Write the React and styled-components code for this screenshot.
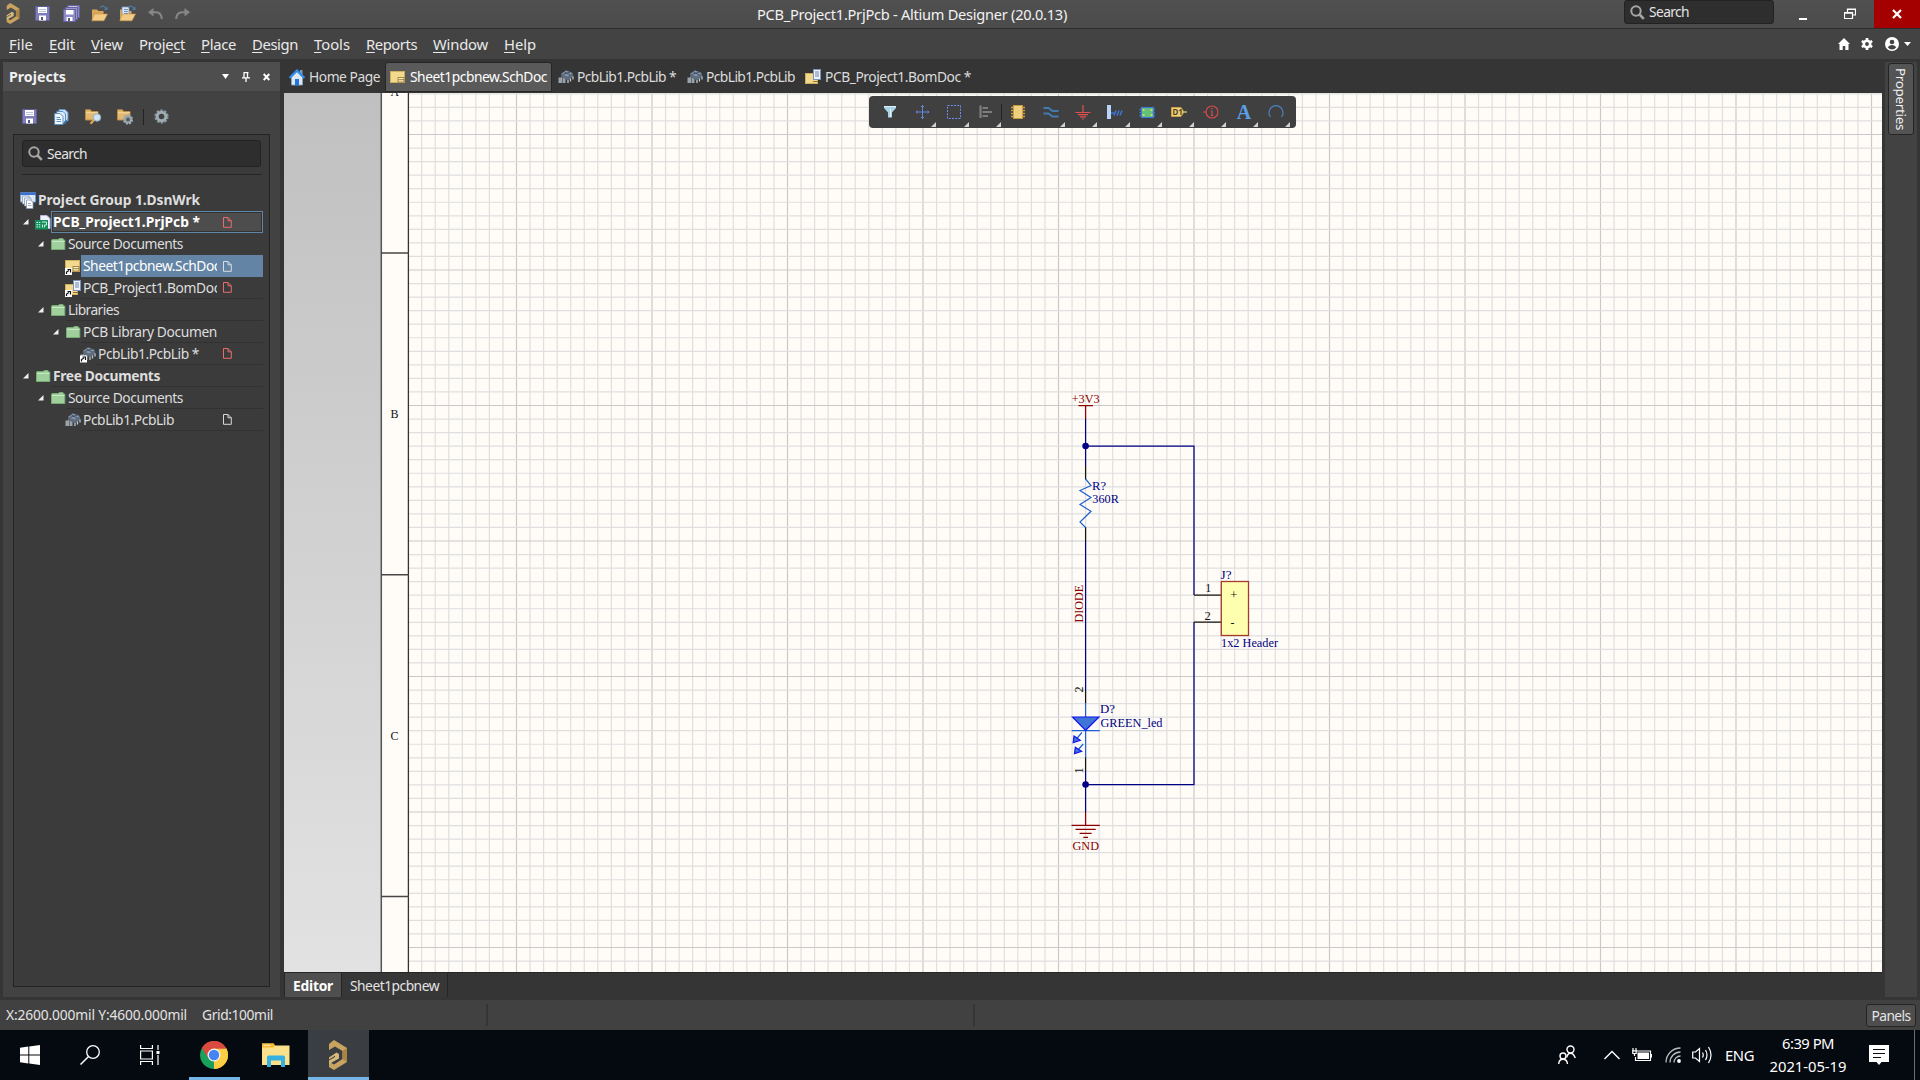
import React, { useLayoutEffect, useRef, useState } from "react";
import styled, { createGlobalStyle, css } from "styled-components";

const GlobalStyle = createGlobalStyle`
  * { box-sizing: border-box; }
  html, body { margin: 0; padding: 0; background: #363636; overflow: hidden; }
  body { font-family: "Noto Sans", "Segoe UI", sans-serif; color: #e6e6e6; }
  svg { display: block; flex: none; }
`;

/* ---------- text ---------- */

const TextSpan = styled.span`
  display: inline-block;
  flex: none;
  white-space: pre;
  font-size: ${(p) => p.$size}px;
  font-weight: ${(p) => (p.$bold ? 700 : 400)};
  color: ${(p) => p.$color};
  line-height: 20px;
  u {
    text-decoration: underline;
    text-decoration-thickness: 1px;
    text-underline-offset: 2px;
  }
`;

/* Tightens or loosens the tracking so that the text spans a given width. */
function Label({ w, size = 13.8, bold, color = "#e4e4e4", children }) {
  const ref = useRef(null);
  const [spacing, setSpacing] = useState(0);
  useLayoutEffect(() => {
    const el = ref.current;
    if (!w || !el) return;
    el.style.letterSpacing = "0px";
    const natural = el.getBoundingClientRect().width;
    const next = (w - natural) / el.textContent.length;
    el.style.letterSpacing = `${next}px`;
    setSpacing(next);
  }, [w]);
  return (
    <TextSpan ref={ref} $size={size} $bold={bold} $color={color} style={{ letterSpacing: `${spacing}px` }}>
      {children}
    </TextSpan>
  );
}

/* ---------- icons ---------- */

const AltiumLogo = ({ w = 14, h = 21 }) => (
  <svg width={w} height={h} viewBox="0 0 20 30">
    <path d="M6 0 L19 8 V22 L6 30 L1 27 V21.5 L6 24.5 L14.5 19 V11 L7 6.5 L1 10 V4 Z" fill="#c9a460" />
    <path d="M14.5 11 L19 8 V22 L14.5 19 Z" fill="#a98443" />
    <path d="M1 17.5 L8.500 12.500 L11 14 V18.500 L1 24 V20.500 L7 17 V15.800 L1 19.500 Z" fill="#d8b878" />
  </svg>
);

const SaveIcon = () => (
  <svg width="15" height="15" viewBox="0 0 15 15">
    <path d="M0.5 0.5 H14.5 V14.5 H0.5 Z" fill="#7f7dbb" stroke="#5f5d97" />
    <rect x="3" y="1" width="9" height="6" fill="#fff" />
    <path d="M4 3.5 H11 M4 5.5 H11" stroke="#b9c3d6" />
    <rect x="4" y="9.5" width="7" height="5" fill="#fff" />
    <rect x="6" y="11" width="2" height="3" fill="#55557f" />
  </svg>
);

const SaveAllIcon = () => (
  <svg width="17" height="17" viewBox="0 0 17 17">
    <path d="M4.5 0.5 H16.5 V12.5 H4.5 Z" fill="#8d8bc6" stroke="#65639e" />
    <path d="M6 2.5 H14" stroke="#fff" strokeWidth="2" />
    <path d="M2.5 2.5 H14.5 V14.5 H2.5 Z" fill="#9997ce" stroke="#65639e" />
    <path d="M0.5 4.5 H12.5 V16.5 H0.5 Z" fill="#8d8bc6" stroke="#65639e" />
    <rect x="3" y="5" width="7.500" height="4.500" fill="#fff" />
    <rect x="3.500" y="12" width="6" height="4" fill="#fff" />
    <rect x="5" y="13" width="2" height="3" fill="#55557f" />
  </svg>
);

const OpenIcon = ({ docs }) => (
  <svg width="17" height="17" viewBox="0 0 17 17">
    <path d="M1 15 V4.500 H6 L7.500 6 H12.500 V15 Z" fill="#d9a757" />
    {docs && (
      <g>
        <path d="M3 2 H10 V11 H3 Z" fill="#dbe8f7" stroke="#7f9cc0" strokeWidth="0.8" />
        <path d="M5 4.500 H9 M5 6.500 H9 M5 8.500 H9" stroke="#6d8fba" />
      </g>
    )}
    <path d="M3.500 9 H16.500 L13 15.800 H0.800 Z" fill="#f2cb86" stroke="#c99645" strokeWidth="0.6" />
    <path d="M9.500 2.500 Q12.500 -0.500 15 3.500" fill="none" stroke="#4e7ea8" strokeWidth="1.2" />
    <path d="M16.500 1.500 V5 H12.800 Z" fill="#4e7ea8" />
  </svg>
);

const UndoIcon = ({ flip }) => (
  <svg width="15" height="12" viewBox="0 0 15 12" transform={flip ? "scale(-1 1)" : undefined}>
    <path d="M2 4.200 H8 Q13.500 4.500 13.800 11" fill="none" stroke="#868686" strokeWidth="2" />
    <path d="M0 4.200 L5.500 0 V8.500 Z" fill="#868686" />
  </svg>
);

const MagnifierIcon = () => (
  <svg width="15" height="15" viewBox="0 0 15 15">
    <circle cx="6" cy="6" r="4.700" fill="none" stroke="#a5a5a5" strokeWidth="2" />
    <path d="M9.500 9.500 L13.800 13.800" stroke="#a5a5a5" strokeWidth="2.6" />
  </svg>
);

const PagesIcon = () => (
  <svg width="15" height="16" viewBox="0 0 15 16">
    <path d="M5 0.500 H11 L14 3.500 V12 H5 Z" fill="#cfe2f5" stroke="#5c8fc4" />
    <path d="M2.800 2.500 H9 L11.500 5 V14 H2.800 Z" fill="#dcebf9" stroke="#5c8fc4" />
    <path d="M0.600 4.500 H6 L9 7.500 V15.500 H0.600 Z" fill="#f0f7fd" stroke="#5c8fc4" />
    <path d="M2.500 8.500 H6 M2.500 10.500 H7 M2.500 12.500 H7" stroke="#5c8fc4" />
    <path d="M14.500 10 L10 15 V12.500" fill="#2f74c0" />
  </svg>
);

const FolderToolIcon = ({ gear }) => (
  <svg width="17" height="16" viewBox="0 0 17 16">
    <path d="M0.500 11 V0.800 H5.500 L6.500 2.500 H13 V11 Z" fill="#e3b76f" stroke="#b98c45" />
    <path d="M1 3.800 H13" stroke="#f5dba6" />
    {gear ? (
      <g>
        <circle cx="11" cy="10.500" r="4" fill="#6f7b82" stroke="#9eabb2" strokeWidth="2.200" strokeDasharray="2 1.100" />
        <circle cx="11" cy="10.500" r="3" fill="none" stroke="#9eabb2" strokeWidth="1.500" />
        <circle cx="11" cy="10.500" r="1.500" fill="#555" />
      </g>
    ) : (
      <g>
        <path d="M9 11 L5.500 14.800" stroke="#e0a850" strokeWidth="2.200" />
        <circle cx="12" cy="8.500" r="3.700" fill="#cfe3f2" stroke="#8fb0c8" />
      </g>
    )}
  </svg>
);

const ToolGearIcon = () => (
  <svg width="15" height="15" viewBox="0 0 15 15">
    <circle cx="7.500" cy="7.500" r="5.900" fill="none" stroke="#8b979d" strokeWidth="2.400" strokeDasharray="2.400 1.300" />
    <circle cx="7.500" cy="7.500" r="4.300" fill="none" stroke="#9dabb2" strokeWidth="3" />
  </svg>
);

const FolderIcon = () => (
  <svg width="15" height="13" viewBox="0 0 15 13">
    <path d="M0.500 11.500 V2 L1.500 1.500 H7 L8.500 0.500 H12 L12.500 2 H13.800 V11.500 Z" fill="#9fd09b" stroke="#79aa76" />
    <path d="M1 3.500 H13.500" stroke="#c5e8c2" />
  </svg>
);

const ShortcutMark = ({ x = 0, y = 8 }) => (
  <g transform={`translate(${x} ${y})`}>
    <rect width="7" height="7" fill="#fff" />
    <path d="M1.500 6 V4 L4 2.500 M2.500 1.500 H5.500 V4.500" fill="none" stroke="#111" strokeWidth="1.200" />
  </g>
);

const SchIcon = ({ link }) => (
  <svg width="16" height="17" viewBox="0 0 16 17">
    <rect x="0.500" y="2.500" width="14" height="11" fill="#f3d98d" stroke="#cfae5c" />
    <rect x="8" y="8.500" width="6" height="4.500" fill="#fdf0c0" stroke="#8f7430" strokeWidth="0.8" />
    <path d="M8.500 10.700 H14" stroke="#8f7430" strokeWidth="0.9" />
    {link && <ShortcutMark x={0} y={10} />}
  </svg>
);

const BomIcon = ({ link }) => (
  <svg width="16" height="17" viewBox="0 0 16 17">
    <rect x="0.500" y="4.500" width="12" height="10" fill="#f3d98d" stroke="#cfae5c" />
    <rect x="8.500" y="0.500" width="7" height="10" fill="#eef3fb" stroke="#7d94bd" />
    <path d="M10 3 H14 M10 5 H14 M10 7 H14" stroke="#6f86b0" />
    <path d="M8 12.500 H13" stroke="#8f7430" strokeWidth="1" />
    {link && <ShortcutMark x={0} y={10} />}
  </svg>
);

const LibIcon = ({ link }) => (
  <svg width="16" height="17" viewBox="0 0 16 17">
    <path d="M3 5 L8 1.500 L14.500 4 L15.500 7.500 L10 11.500 L3.500 8 Z" fill="#5e6c7d" />
    <path d="M3 5 L8 1.500 L14.500 4 L9.500 7.500 Z" fill="#8496ab" />
    <path d="M4.500 5.500 L12.500 3 M6.500 3 L12 6" stroke="#3f4b59" strokeWidth="0.9" />
    <path d="M15 7.500 V10.500 M12.500 9.500 V12.500 M10 11 V14" stroke="#c6d0da" strokeWidth="1.200" />
    <path d="M0.500 8.500 H3 L4 7.500 V14 H0.500 Z M4.500 8.500 L7.500 10 V14 H4.500 Z" fill="#9aa3ac" />
    {link && <ShortcutMark x={0} y={9.500} />}
  </svg>
);

const WorkspaceIcon = () => (
  <svg width="16" height="17" viewBox="0 0 16 17">
    <path d="M0.500 0.800 H15.500 V10 H0.500 Z" fill="#dfe8f5" stroke="#7d97c2" />
    <path d="M0 0.500 H16 V3 H0 Z" fill="#3b6fd0" />
    <path d="M2.500 4 H9 V12 H2.500 Z" fill="#f4f7fb" stroke="#8798b3" strokeWidth="0.8" />
    <path d="M4.500 6 H11 V14 H4.500 Z" fill="#f4f7fb" stroke="#8798b3" strokeWidth="0.8" />
    <path d="M6.500 8 H10.500 L13 10.500 V16.500 H6.500 Z" fill="#fff" stroke="#8798b3" strokeWidth="0.8" />
    <path d="M8 11.500 H11 M8 13.500 H11.500" stroke="#8798b3" strokeWidth="0.8" />
  </svg>
);

const PcbProjectIcon = () => (
  <svg width="16" height="15" viewBox="0 0 16 15">
    <path d="M5.500 0.500 H12 L15 3.500 V13.500 H5.500 Z" fill="#eef0fa" stroke="#b5b9d8" />
    <rect x="0" y="5" width="13" height="9.500" fill="#138f5b" />
    <path d="M1.500 7.500 H5.500 M1.500 9.700 H5.500 M1.500 11.900 H5.500" stroke="#e0fff0" strokeDasharray="1.500 0.800" />
    <path d="M7 7 H11.500 V10 H9.500 V12.500 M7.500 12.500 V9.500" fill="none" stroke="#c9f3dd" />
  </svg>
);

const HomeTabIcon = () => (
  <svg width="16" height="17" viewBox="0 0 16 17">
    <path d="M11 1 H13.500 V6 H11 Z" fill="#7f9cb3" />
    <path d="M2.500 8 L8 2.500 L13.500 8 V16 H2.500 Z" fill="#dfe9f2" stroke="#8aa5bb" strokeWidth="0.8" />
    <path d="M0.500 9 L8 1.500 L15.500 9" fill="none" stroke="#2f8cf0" strokeWidth="2.200" />
    <rect x="6" y="10" width="4" height="6.500" fill="#2374e0" />
  </svg>
);

const DocMark = ({ color }) => (
  <svg width="9" height="11" viewBox="0 0 9 11">
    <path d="M0.500 0.500 H5 L8.300 3.800 V10.300 H0.500 Z M5 0.500 V3.800 H8.300" fill="none" stroke={color} strokeWidth="1" />
  </svg>
);

const Expander = () => (
  <svg width="6" height="6" viewBox="0 0 6 6">
    <path d="M5.500 0 V5.500 H0 Z" fill="#f0f0f0" />
  </svg>
);

/* ---------- window frame ---------- */

const Window = styled.div`
  width: 1920px;
  height: 1080px;
  display: flex;
  flex-direction: column;
  background: #353535;
`;

const TitleBar = styled.header`
  height: 29px;
  flex: none;
  display: grid;
  grid-template-columns: 755px 1fr 296px;
  background: linear-gradient(#505050, #4b4b4b);
  border-bottom: 1px solid #2d2d2d;
`;

const QuickAccess = styled.div`
  display: flex;
  align-items: center;
  padding: 0 0 1px 6px;
`;

const QuickSlot = styled.div`
  width: ${(p) => p.$w}px;
  display: flex;
  align-items: center;
`;

const TitleCaption = styled.div`
  display: flex;
  align-items: center;
  padding-bottom: 1px;
  padding-left: 2px;
`;

const WindowControls = styled.div`
  display: flex;
  height: 28px;
`;

const SearchBox = styled.div`
  width: ${(p) => p.$w}px;
  height: ${(p) => p.$h}px;
  flex: none;
  display: flex;
  align-items: center;
  gap: 4px;
  padding-left: 5px;
  background: #2e2e2e;
  border: 1px solid #222;
  border-radius: 3px;
`;

const ControlButton = styled.div`
  width: ${(p) => p.$w}px;
  height: 28px;
  display: flex;
  align-items: center;
  justify-content: center;
  padding-right: ${(p) => p.$shift || 0}px;
  padding-bottom: 1px;
  background: ${(p) => (p.$danger ? "#a40000" : "transparent")};
`;

const MenuBar = styled.nav`
  height: 30px;
  flex: none;
  display: flex;
  justify-content: space-between;
  background: #434343;
`;

const MenuItems = styled.div`
  display: flex;
  align-items: center;
  gap: 16px;
  padding-left: 9px;
`;

const MenuActions = styled.div`
  display: flex;
  align-items: center;
  padding-right: 9px;
`;

const MenuAction = styled.div`
  display: flex;
  margin-left: ${(p) => p.$gap}px;
`;

const Workspace = styled.main`
  height: 941px;
  flex: none;
  display: flex;
  padding: 3px;
`;

/* ---------- projects panel ---------- */

const Panel = styled.aside`
  width: 277px;
  flex: none;
  height: 935px;
  display: flex;
  flex-direction: column;
  background: #424242;
`;

const PanelHeader = styled.div`
  height: 29px;
  flex: none;
  display: flex;
  align-items: center;
  padding: 0 10px 0 6px;
  background: #4e4e4e;
`;

const PanelHeaderActions = styled.div`
  margin-left: auto;
  display: flex;
  align-items: center;
  gap: 13px;
`;

const PanelTools = styled.div`
  height: 43px;
  flex: none;
  display: flex;
  align-items: center;
  padding: 8px 0 0 19px;
`;

const PanelTool = styled.div`
  width: ${(p) => p.$w}px;
  display: flex;
`;

const ToolDivider = styled.div`
  width: 1px;
  height: 16px;
  margin-right: 10px;
  background: #222;
`;

const PanelBody = styled.div`
  height: 853px;
  flex: none;
  margin: 0 10px;
  padding: 5px 6px 0 8px;
  display: flex;
  flex-direction: column;
  background: #3b3b3b;
  border: 1px solid #232323;
`;

const Rule = styled.div`
  height: 1px;
  flex: none;
  margin: 7px 1px 14px 0;
  background: #272727;
`;

const Tree = styled.div`
  display: flex;
  flex-direction: column;
  margin-left: -8px;
`;

const TreeRow = styled.div`
  height: 22px;
  flex: none;
  display: flex;
  align-items: center;
  padding-left: ${(p) => p.$indent}px;
`;

const ExpanderSlot = styled.div`
  width: 13px;
  display: flex;
  padding-left: 1px;
`;

const IconSlot = styled.div`
  width: 16px;
  display: flex;
  justify-content: flex-end;
`;

const RowBody = styled.div`
  flex: 1;
  min-width: 0;
  height: 22px;
  display: flex;
  align-items: center;
  justify-content: space-between;
  padding: 0 31px 0 2px;
  ${(p) =>
    p.$state === "active" &&
    css`
      background: #4d4d4d;
      border: 1px solid #5f86a8;
      box-shadow: inset 0 0 0 1px #333;
      padding: 0 30px 0 1px;
    `}
  ${(p) =>
    p.$state === "selected" &&
    css`
      background: #6384a4;
    `}
  ${(p) =>
    p.$line &&
    css`
      border-bottom: 1px solid #323232;
    `}
`;

const RowText = styled.div`
  width: ${(p) => p.$w}px;
  overflow: hidden;
  display: flex;
`;

const treeRows = [
  { indent: 6, Icon: WorkspaceIcon, text: "Project Group 1.DsnWrk", w: 162, bold: true, root: true },
  { indent: 8, open: true, Icon: PcbProjectIcon, text: "PCB_Project1.PrjPcb *", w: 147, bold: true, state: "active", mark: "#e86c6c" },
  { indent: 23, open: true, Icon: FolderIcon, text: "Source Documents", w: 115 },
  { indent: 38, Icon: SchIcon, link: true, text: "Sheet1pcbnew.SchDoc", w: 137, state: "selected", mark: "#d8dde2" },
  { indent: 38, Icon: BomIcon, link: true, text: "PCB_Project1.BomDoc", w: 137, mark: "#e86c6c", line: true },
  { indent: 23, open: true, Icon: FolderIcon, text: "Libraries", w: 51, line: true },
  { indent: 38, open: true, Icon: FolderIcon, text: "PCB Library Documen", w: 134, line: true },
  { indent: 53, Icon: LibIcon, link: true, text: "PcbLib1.PcbLib *", w: 101, mark: "#e86c6c", line: true },
  { indent: 8, open: true, Icon: FolderIcon, text: "Free Documents", w: 107, bold: true, line: true },
  { indent: 23, open: true, Icon: FolderIcon, text: "Source Documents", w: 115, line: true },
  { indent: 38, Icon: LibIcon, text: "PcbLib1.PcbLib", w: 91, mark: "#d8d8d8", line: true },
];

function ProjectsPanel() {
  return (
    <Panel>
      <PanelHeader>
        <Label size={14.2} bold w={57} color="#f0f0f0">Projects</Label>
        <PanelHeaderActions>
          <svg width="7" height="5" viewBox="0 0 7 5"><path d="M0 0 H7 L3.500 5 Z" fill="#fff" /></svg>
          <svg width="8" height="10" viewBox="0 0 8 10"><path d="M1.500 0.600 H6.500 M2 0.500 V5.500 M5.500 0.500 V5.500 M0 5.800 H8 M4 6 V10" stroke="#fff" strokeWidth="1.300" fill="none" /></svg>
          <svg width="7" height="8" viewBox="0 0 7 8"><path d="M0.700 1 L6.300 7 M6.300 1 L0.700 7" stroke="#fff" strokeWidth="1.900" /></svg>
        </PanelHeaderActions>
      </PanelHeader>
      <PanelTools>
        <PanelTool $w={32}><SaveIcon /></PanelTool>
        <PanelTool $w={31}><PagesIcon /></PanelTool>
        <PanelTool $w={32}><FolderToolIcon /></PanelTool>
        <PanelTool $w={26}><FolderToolIcon gear /></PanelTool>
        <ToolDivider />
        <PanelTool $w={15}><ToolGearIcon /></PanelTool>
      </PanelTools>
      <PanelBody>
        <SearchBox $w={239} $h={27}>
          <MagnifierIcon />
          <Label w={40}>Search</Label>
        </SearchBox>
        <Rule />
        <Tree>
          {treeRows.map((r, i) => (
            <TreeRow key={i} $indent={r.indent}>
              {!r.root && <ExpanderSlot>{r.open && <Expander />}</ExpanderSlot>}
              <IconSlot><r.Icon link={r.link} /></IconSlot>
              <RowBody $state={r.state} $line={r.line}>
                <RowText $w={r.mark ? 172 - r.indent : 175}>
                  <Label w={r.w} bold={r.bold} color={r.state ? "#ffffff" : "#dedede"}>{r.text}</Label>
                </RowText>
                {r.mark && <DocMark color={r.mark} />}
              </RowBody>
            </TreeRow>
          ))}
        </Tree>
      </PanelBody>
    </Panel>
  );
}

/* ---------- editor ---------- */

const Editor = styled.section`
  width: 1598px;
  margin-left: 4px;
  flex: none;
  display: flex;
  flex-direction: column;
`;

const TabStrip = styled.div`
  height: 31px;
  flex: none;
  display: flex;
`;

const Tab = styled.div`
  height: 30px;
  width: ${(p) => p.$w}px;
  flex: none;
  display: flex;
  align-items: center;
  gap: ${(p) => 8 - p.$pad}px;
  padding-left: ${(p) => p.$pad}px;
  border: 1px solid transparent;
  ${(p) =>
    p.$active &&
    css`
      background: #5a5a5a;
      border-color: #262626;
      border-radius: 3px 3px 0 0;
    `}
`;

const CanvasArea = styled.div`
  position: relative;
  width: 1598px;
  height: 879px;
  flex: none;
`;

const ActiveBar = styled.div`
  position: absolute;
  left: 585px;
  top: 3px;
  width: 427px;
  height: 32px;
  display: flex;
  align-items: center;
  padding-left: 4px;
  background: #404040;
  border-radius: 4px;
`;

const BarButton = styled.div`
  position: relative;
  width: 32.2px;
  height: 32px;
  display: flex;
  align-items: center;
  justify-content: center;
  padding-left: 1px;
  ${(p) =>
    p.$sep &&
    css`
      &::before {
        content: "";
        position: absolute;
        right: 0;
        top: 8px;
        width: 1px;
        height: 16px;
        background: #222;
      }
    `}
  ${(p) =>
    p.$menu &&
    css`
      &::after {
        content: "";
        position: absolute;
        right: 1px;
        bottom: 1px;
        border-left: 5px solid transparent;
        border-bottom: 5px solid #d0d0d0;
      }
    `}
`;

const barButtons = [
  { art: <g><path d="M2 2 H14 V4 L10 8.500 V13.500 H6 V8.500 L2 4 Z" fill="#a9d3e6" /><path d="M2 2.500 H14" stroke="#dff2fa" /><path d="M8.500 5 V13" stroke="#e4f5fb" /></g> },
  { menu: true, art: <path d="M8.500 1.500 V14.500 M2 8 H15 M7 3 L8.500 1.500 L10 3 M7 13 L8.500 14.500 L10 13 M3.500 6.500 L2 8 L3.500 9.500 M13.500 6.500 L15 8 L13.500 9.500" stroke="#6486dc" fill="none" /> },
  { menu: true, art: <rect x="1.500" y="1.500" width="13" height="13" fill="none" stroke="#6f8ff0" strokeDasharray="2 1.250" /> },
  { menu: true, sep: true, art: <path d="M2.500 1.500 V14 M4.500 4 H10 M4.500 8 H14 M4.500 12 H10" stroke="#7d7d7d" strokeWidth="2.200" fill="none" /> },
  { art: <g><rect x="3.500" y="1.500" width="9" height="13" fill="#efcf80" stroke="#c99b3f" /><path d="M1 3.500 H3 M1 6.500 H3 M1 9.500 H3 M1 12.500 H3 M13 3.500 H15 M13 6.500 H15 M13 9.500 H15 M13 12.500 H15" stroke="#c99b3f" strokeWidth="1.400" /></g> },
  { menu: true, art: <path d="M0.500 4 H5.500 L9.500 7 H15.500 M0.500 9.500 H5.500 L9.500 12.500 H15.500" fill="none" stroke="#427bb2" strokeWidth="2" /> },
  { menu: true, art: <path d="M8 1 V8 M0.500 8.500 H15.500 M3 10.700 H13 M5 12.900 H11 M7 15 H9" stroke="#e05050" strokeWidth="1.200" fill="none" /> },
  { menu: true, art: <g><rect x="0" y="1" width="4" height="14" fill="#b7d4f8" /><path d="M4 9 H7 M7 11.500 L9 6.500 M10 11.500 L12 6.500 M13 11.500 L15 6.500" stroke="#3e74d8" strokeWidth="1.500" /></g> },
  { menu: true, art: <g><rect x="2.500" y="3.500" width="12" height="10" fill="#63c17c" stroke="#3f78d0" strokeWidth="1.200" /><path d="M0.500 5.500 H3 M0.500 8.500 H3 M0.500 11.500 H3 M13.500 5.500 H16 M13.500 8.500 H16 M13.500 11.500 H16" stroke="#3f78d0" strokeWidth="1.300" /><path d="M3.500 6 H5.500 M3.500 11 H5.500 M11.500 6 H13.500 M11.500 11 H13.500" stroke="#e9e25c" strokeWidth="1.600" /></g> },
  { menu: true, art: <g><path d="M0.500 3.500 H10 L13 8 L10 12.500 H0.500 Z" fill="#eed083" stroke="#c8a24c" /><path d="M13 8 H16" stroke="#e9c879" strokeWidth="1.200" /><text x="1.500" y="11" fontFamily="Noto Sans" fontSize="8" fontWeight="700" fill="#59440f">D1</text></g> },
  { menu: true, art: <g><circle cx="9" cy="8" r="6" fill="none" stroke="#d94b4b" strokeWidth="1.100" /><path d="M0 8 H3 M9 7 V11.500 M9 4 V5.500 M7.800 7 H9 M7.800 11.500 H10.200" stroke="#d94b4b" strokeWidth="1.200" /></g> },
  { menu: true, art: <text x="8" y="15" textAnchor="middle" fontFamily="Liberation Serif" fontSize="20" fontWeight="700" fill="#5d9fe6">A</text> },
  { menu: true, art: <path d="M2.500 13 A7 7 0 1 1 13.500 13" fill="none" stroke="#4c82c0" strokeWidth="1.200" /> },
];

const tabs = [
  { w: 101, pad: 4, Icon: HomeTabIcon, text: "Home Page", tw: 71 },
  { w: 167, pad: 4, Icon: SchIcon, text: "Sheet1pcbnew.SchDoc", tw: 137, active: true },
  { w: 129, pad: 5, Icon: LibIcon, text: "PcbLib1.PcbLib *", tw: 99 },
  { w: 119, pad: 5, Icon: LibIcon, text: "PcbLib1.PcbLib", tw: 89 },
  { w: 180, pad: 4, Icon: BomIcon, text: "PCB_Project1.BomDoc *", tw: 146 },
];

/* ---------- schematic drawing ---------- */

const NAVY = "#000084";
const PIN = "#14140a";
const MAROON = "#8c0000";
const BLUE = "#1f62d0";

const Net = styled.path`
  fill: none;
  stroke: ${(p) => p.$color};
  stroke-width: ${(p) => p.$w || 1.25};
`;

const SchText = styled.text`
  font-family: "Liberation Serif", "Times New Roman", serif;
  font-size: 12.8px;
  fill: ${(p) => p.$color};
`;

/* Schematic lettering condensed to a fixed run length. */
const Lettering = ({ len, ...rest }) => <SchText textLength={len} lengthAdjust="spacingAndGlyphs" {...rest} />;

const PITCH = 13.55;

function gridLines(origin, from, to) {
  const out = [];
  const first = Math.ceil((from - origin) / PITCH);
  for (let i = first; origin + i * PITCH < to; i++) {
    out.push({ at: origin + i * PITCH, major: i % 10 === 0 });
  }
  return out;
}

function Schematic() {
  const vs = gridLines(516.5, 410, 1882);
  const hs = gridLines(134.5, 93, 972);
  const color = (l) => (l.major ? "#c9c9cb" : "#dfdfe0");
  return (
    <svg width="1598" height="879" viewBox="284 93 1598 879">
      <defs>
        <linearGradient id="desk" x1="0" y1="0" x2="0" y2="1">
          <stop offset="0" stopColor="#c0c0c0" />
          <stop offset="1" stopColor="#e2e2e2" />
        </linearGradient>
      </defs>
      <rect x="284" y="93" width="98" height="879" fill="url(#desk)" />
      <rect x="382" y="93" width="1500" height="879" fill="#fffcf7" />
      {[...vs].sort((a, b) => a.major - b.major).map((l) => (
        <line key={"v" + l.at} x1={l.at} x2={l.at} y1="93" y2="972" stroke={color(l)} strokeWidth="1.200" />
      ))}
      {[...hs].sort((a, b) => a.major - b.major).map((l) => (
        <line key={"h" + l.at} x1="409" x2="1882" y1={l.at} y2={l.at} stroke={color(l)} strokeWidth="1.200" />
      ))}
      <path d="M381.300 93 V972" stroke="#555" strokeWidth="1.500" />
      <path d="M408.400 93 V972" stroke="#333" strokeWidth="1.300" />
      <path d="M381 253 H409 M381 574.700 H409 M381 896.500 H409" stroke="#4a4446" strokeWidth="1.400" />
      <Lettering $color="#111" x="390.500" y="96" len="8.500">A</Lettering>
      <Lettering $color="#111" x="390.500" y="418" len="8">B</Lettering>
      <Lettering $color="#111" x="390.500" y="740" len="8">C</Lettering>

      {/* wires */}
      <Net $color={NAVY} d="M1085.600 419 V466 M1085.600 541 V690 M1085.600 771 V812" />
      <Net $color={NAVY} d="M1085.600 446 H1194 V595" />
      <Net $color={NAVY} d="M1194 622 V784.500 H1085.600" />
      <circle cx="1085.600" cy="446" r="3.300" fill={NAVY} />
      <circle cx="1085.600" cy="784.500" r="3.300" fill={NAVY} />

      {/* power ports */}
      <Net $color={MAROON} d="M1078.500 405.500 H1093 M1085.600 405.500 V419" />
      <Lettering $color={MAROON} x="1071.700" y="402.500" len="28">+3V3</Lettering>
      <Net $color={MAROON} d="M1085.600 812 V825 M1071.500 825.300 H1099.800 M1075.500 829.400 H1095.700 M1079.600 833.400 H1091.600 M1083.300 837.400 H1088" />
      <Lettering $color={MAROON} x="1072.500" y="849.500" len="26.500">GND</Lettering>

      {/* resistor */}
      <Net $color={PIN} d="M1085.600 466 V479.500 M1085.600 527 V541" />
      <Net $color={BLUE} $w={1.2} d="M1085.600 479 L1091 485.500 L1080 490.500 L1091 497.500 L1080 504.500 L1091 511.300 L1080 522 L1085.600 527.500" />
      <Lettering $color={NAVY} x="1092" y="489.700" len="14">R?</Lettering>
      <Lettering $color={NAVY} x="1092.300" y="503" len="26.500">360R</Lettering>
      <Lettering $color={MAROON} transform="translate(1083 622.500) rotate(-90)" len="37.500">DIODE</Lettering>

      {/* LED */}
      <Net $color={PIN} d="M1085.600 690 V703 M1085.600 757 V771" />
      <Net $color={BLUE} d="M1085.600 703 V717 M1071.700 730.500 H1099.800 M1085.600 730 V757.500" />
      <path d="M1072.500 717 H1099 L1085.600 730.300 Z" fill="#3f75d6" stroke="#1414f0" strokeWidth="1.200" />
      <Net $color={BLUE} d="M1081.900 732.500 L1076 739.500 M1083.200 744 L1077.500 750.500" />
      <path d="M1074 736 L1080.300 740.200 L1073.200 742.600 Z" fill="#3f75d6" stroke="#1414f0" strokeWidth="1.200" />
      <path d="M1075.300 747.300 L1081.600 751.300 L1074.500 753.600 Z" fill="#3f75d6" stroke="#1414f0" strokeWidth="1.200" />
      <Lettering $color="#111" transform="translate(1082.700 692.500) rotate(-90)" len="6">2</Lettering>
      <Lettering $color="#111" transform="translate(1082.700 773.500) rotate(-90)" len="6">1</Lettering>
      <Lettering $color={NAVY} x="1100" y="713" len="15">D?</Lettering>
      <Lettering $color={NAVY} x="1100.500" y="727" len="62">GREEN_led</Lettering>

      {/* header */}
      <Net $color={PIN} d="M1194 595 H1221 M1194 622 H1221" />
      <rect x="1221.300" y="581.500" width="27.200" height="54" fill="#ffffb0" stroke="#a33a2a" strokeWidth="1.300" />
      <Lettering $color={NAVY} x="1220.500" y="578.500" len="11">J?</Lettering>
      <Lettering $color="#111" x="1205.300" y="592" len="6">1</Lettering>
      <Lettering $color="#111" x="1204.500" y="620" len="6.300">2</Lettering>
      <Lettering $color="#111" x="1230.300" y="598.500" len="7">+</Lettering>
      <Lettering $color="#111" x="1230.500" y="627" len="4">-</Lettering>
      <Lettering $color={NAVY} x="1221" y="646.700" len="57">1x2 Header</Lettering>
    </svg>
  );
}

const DocTabs = styled.div`
  height: 25px;
  flex: none;
  display: flex;
  border-top: 1px solid #262626;
`;

const DocTab = styled.div`
  width: ${(p) => p.$w}px;
  display: flex;
  align-items: center;
  justify-content: center;
  padding-top: 2px;
  background: ${(p) => (p.$active ? "#4f4f4f" : "#373737")};
  border: solid #262626;
  border-width: 0 1px 0 ${(p) => (p.$active ? 1 : 0)}px;
`;

const RightDock = styled.div`
  width: 32px;
  height: 935px;
  flex: none;
  margin-left: 3px;
  padding: 1px 3px;
  background: #424242;
`;

const DockTab = styled.div`
  width: 26px;
  height: 72px;
  display: flex;
  align-items: center;
  justify-content: center;
  background: #545454;
  border: 1px solid #242424;
  border-radius: 3px;
  writing-mode: vertical-rl;
  font-size: 13.4px;
  letter-spacing: -0.3px;
  color: #f0f0f0;
`;

/* ---------- status bar and taskbar ---------- */

const StatusBar = styled.footer`
  height: 30px;
  flex: none;
  display: flex;
  align-items: center;
  padding: 0 4px 0 6px;
  background: #414141;
`;

const StatusCell = styled.div`
  width: ${(p) => p.$w}px;
  height: 22px;
  display: flex;
  align-items: center;
  gap: 15px;
  border-right: 2px solid #353535;
`;

const PanelsButton = styled.div`
  width: 50px;
  height: 23px;
  margin-left: auto;
  display: flex;
  align-items: center;
  justify-content: center;
  padding-top: 1px;
  background: #4e4e4e;
  border: 1px solid #242424;
  border-radius: 3px;
`;

const Taskbar = styled.div`
  height: 50px;
  flex: none;
  display: flex;
  justify-content: space-between;
  background: #050910;
`;

const TaskGroup = styled.div`
  display: flex;
  align-items: center;
`;

const TaskButton = styled.div`
  width: ${(p) => p.$w}px;
  height: 50px;
  margin-left: ${(p) => p.$gap || 0}px;
  display: flex;
  align-items: center;
  justify-content: center;
  background: ${(p) => (p.$current ? "#3a3e43" : "transparent")};
  border-bottom: 3px solid ${(p) => (p.$open ? "#76b5e8" : "transparent")};
  padding-top: 3px;
  padding-right: ${(p) => (p.$open ? 2 : 0)}px;
`;

const TrayItem = styled.div`
  display: flex;
  margin-right: ${(p) => p.$gap}px;
`;

const Clock = styled.div`
  width: 80px;
  display: flex;
  flex-direction: column;
  align-items: center;
  gap: 3px;
  margin-right: 21px;
  padding-bottom: 2px;
`;

const ShowDesktop = styled.div`
  width: 6px;
  height: 50px;
  border-left: 1px solid #6a6d71;
`;

const menus = [
  [<><u>F</u>ile</>, 24], [<><u>E</u>dit</>, 26], [<><u>V</u>iew</>, 32], [<>Proje<u>c</u>t</>, 46],
  [<><u>P</u>lace</>, 35], [<><u>D</u>esign</>, 46], [<><u>T</u>ools</>, 36], [<><u>R</u>eports</>, 51],
  [<><u>W</u>indow</>, 55], [<><u>H</u>elp</>, 32],
];

export default function App() {
  return (
    <Window>
      <GlobalStyle />
      <TitleBar>
        <QuickAccess>
          <QuickSlot $w={29}><AltiumLogo /></QuickSlot>
          <QuickSlot $w={28}><SaveIcon /></QuickSlot>
          <QuickSlot $w={28}><SaveAllIcon /></QuickSlot>
          <QuickSlot $w={28}><OpenIcon /></QuickSlot>
          <QuickSlot $w={29}><OpenIcon docs /></QuickSlot>
          <QuickSlot $w={27}><UndoIcon /></QuickSlot>
          <QuickSlot $w={15}><UndoIcon flip /></QuickSlot>
        </QuickAccess>
        <TitleCaption>
          <Label size={14.6} w={310} color="#f2f2f2">PCB_Project1.PrjPcb - Altium Designer (20.0.13)</Label>
        </TitleCaption>
        <WindowControls>
          <SearchBox $w={150} $h={24}>
            <MagnifierIcon />
            <Label w={40}>Search</Label>
          </SearchBox>
          <ControlButton $w={58}>
            <svg width="10" height="12" viewBox="0 0 10 12"><path d="M1 11 H9" stroke="#fff" strokeWidth="2" /></svg>
          </ControlButton>
          <ControlButton $w={42} $shift={6}>
            <svg width="12" height="12" viewBox="0 0 12 12"><path d="M3.500 4 V1 H11.500 V7 H9 M3 1.500 H12 M0.500 4.500 H8.500 V10.500 H0.500 Z M0 5.200 H9" fill="none" stroke="#fff" strokeWidth="1.200" /></svg>
          </ControlButton>
          <ControlButton $w={46} $danger $shift={1}>
            <svg width="10" height="10" viewBox="0 0 10 10"><path d="M1 1 L9 9 M9 1 L1 9" stroke="#fff" strokeWidth="2.200" /></svg>
          </ControlButton>
        </WindowControls>
      </TitleBar>

      <MenuBar>
        <MenuItems>
          {menus.map(([t, w], i) => <Label key={i} size={14.8} w={w} color="#e9e9e9">{t}</Label>)}
        </MenuItems>
        <MenuActions>
          <MenuAction>
            <svg width="12" height="12" viewBox="0 0 12 12"><path d="M6 0 L12 6 H10.500 V12 H7.300 V8 H4.700 V12 H1.500 V6 H0 Z" fill="#fff" /></svg>
          </MenuAction>
          <MenuAction $gap={11}>
            <svg width="12" height="12" viewBox="0 0 12 12"><circle cx="6" cy="6" r="3.200" fill="none" stroke="#fff" strokeWidth="2.600" /><path d="M6 0 V2.500 M6 9.500 V12 M0.800 3 L3 4.300 M9 7.700 L11.200 9 M11.200 3 L9 4.300 M3 7.700 L0.800 9" stroke="#fff" strokeWidth="2.600" /></svg>
          </MenuAction>
          <MenuAction $gap={12}>
            <svg width="14" height="14" viewBox="0 0 14 14"><circle cx="7" cy="7" r="7" fill="#fff" /><circle cx="7" cy="5" r="2.300" fill="#434343" /><path d="M2.700 10.300 Q4.500 8 7 8 T11.300 10.300 Q9.500 12.500 7 12.500 T2.700 10.300 Z" fill="#434343" /></svg>
          </MenuAction>
          <MenuAction $gap={5}>
            <svg width="7" height="4" viewBox="0 0 7 4"><path d="M0 0 H7 L3.500 4 Z" fill="#fff" /></svg>
          </MenuAction>
        </MenuActions>
      </MenuBar>

      <Workspace>
        <ProjectsPanel />
        <Editor>
          <TabStrip>
            {tabs.map((t, i) => (
              <Tab key={i} $w={t.w} $pad={t.pad} $active={t.active}>
                <t.Icon />
                <Label w={t.tw} color={t.active ? "#fff" : "#dcdcdc"}>{t.text}</Label>
              </Tab>
            ))}
          </TabStrip>
          <CanvasArea>
            <Schematic />
            <ActiveBar>
              {barButtons.map((b, i) => (
                <BarButton key={i} $menu={b.menu} $sep={b.sep}>
                  <svg width="16" height="16" viewBox="0 0 16 16">{b.art}</svg>
                </BarButton>
              ))}
            </ActiveBar>
          </CanvasArea>
          <DocTabs>
            <DocTab $w={58} $active><Label bold w={40} color="#fff">Editor</Label></DocTab>
            <DocTab $w={106}><Label w={89}>Sheet1pcbnew</Label></DocTab>
          </DocTabs>
        </Editor>
        <RightDock>
          <DockTab>Properties</DockTab>
        </RightDock>
      </Workspace>

      <StatusBar>
        <StatusCell $w={482}>
          <Label w={181}>X:2600.000mil Y:4600.000mil</Label>
          <Label w={71}>Grid:100mil</Label>
        </StatusCell>
        <StatusCell $w={487} />
        <PanelsButton><Label w={39}>Panels</Label></PanelsButton>
      </StatusBar>

      <Taskbar>
        <TaskGroup>
          <TaskButton $w={60}>
            <svg width="20" height="20" viewBox="0 0 20 20"><path d="M0 2.800 L8.300 1.600 V9.500 H0 Z M9.300 1.500 L20 0 V9.500 H9.300 Z M0 10.500 H8.300 V18.400 L0 17.200 Z M9.300 10.500 H20 V20 L9.300 18.500 Z" fill="#fff" /></svg>
          </TaskButton>
          <TaskButton $w={60}>
            <svg width="20" height="20" viewBox="0 0 20 20"><circle cx="13" cy="7" r="6.300" fill="none" stroke="#fff" strokeWidth="1.300" /><path d="M8.500 11.500 L0.500 19.500" stroke="#fff" strokeWidth="1.500" /></svg>
          </TaskButton>
          <TaskButton $w={60}>
            <svg width="20" height="20" viewBox="0 0 20 20"><path d="M0.600 0 V3.500 H12.400 V0 M0.600 6 H12.400 V14 H0.600 Z M0.600 20 V16.500 H12.400 V20 M18 0 V5 M18 10 V20" fill="none" stroke="#fff" strokeWidth="1.200" /><rect x="16.500" y="6" width="3" height="3" fill="#fff" /></svg>
          </TaskButton>
          <TaskButton $w={51} $gap={9} $open>
            <svg width="28" height="28" viewBox="0 0 28 28">
              <path d="M14 14 L1.880 7 A14 14 0 0 1 26.120 7 Z" fill="#db4a3e" />
              <path d="M14 14 L26.120 7 A14 14 0 0 1 14 28 Z" fill="#fdcd44" />
              <path d="M14 14 L14 28 A14 14 0 0 1 1.880 7 Z" fill="#1a9f5c" />
              <path d="M14 7.500 H26.400 A14 14 0 0 1 14 28 L19.600 17.200 Z" fill="#fdcd44" />
              <path d="M14 7.500 H26.400 A14 14 0 0 0 1.880 7 L8.400 17.200 Z" fill="#db4a3e" />
              <circle cx="14" cy="14" r="6.500" fill="#f3f3f3" />
              <circle cx="14" cy="14" r="5.200" fill="#4385f3" />
            </svg>
          </TaskButton>
          <TaskButton $w={52} $gap={10}>
            <svg width="28" height="24" viewBox="0 0 28 24">
              <path d="M0 0.500 H11.500 L13 2.500 H27.500 V22 H0 Z" fill="#fde08c" />
              <path d="M0 0.500 H11.500 L13 2.500 L11.500 4.500 H0 Z" fill="#f5b92e" />
              <path d="M1.500 2.300 H8.500" stroke="#fff3cf" strokeWidth="1" />
              <path d="M5 24 V14 Q5 12.500 6.500 12.500 H21.500 Q23 12.500 23 14 V24 H19 V17.500 H9 V24 Z" fill="#35b0e3" />
            </svg>
          </TaskButton>
          <TaskButton $w={61} $gap={6} $current $open><AltiumLogo w={20} h={30} /></TaskButton>
        </TaskGroup>
        <TaskGroup>
          <TrayItem $gap={28}>
            <svg width="18" height="20" viewBox="0 0 18 20"><circle cx="12.500" cy="4.500" r="3.500" fill="none" stroke="#fff" strokeWidth="1.400" /><circle cx="5" cy="11" r="3" fill="none" stroke="#fff" strokeWidth="1.400" /><path d="M8.800 12.500 Q9.500 8.300 12.500 8.300 T17.300 13 M0.700 19 Q1 14.200 5 14.200 T9.500 19" fill="none" stroke="#fff" strokeWidth="1.400" /></svg>
          </TrayItem>
          <TrayItem $gap={12}>
            <svg width="16" height="10" viewBox="0 0 16 10"><path d="M0.500 9 L8 1.500 L15.500 9" fill="none" stroke="#fff" strokeWidth="1.400" /></svg>
          </TrayItem>
          <TrayItem $gap={13}>
            <svg width="20" height="14" viewBox="0 0 20 14"><path d="M5 3 H18.500 V12.500 H3.500 V9" fill="none" stroke="#fff" strokeWidth="1.200" /><rect x="5.500" y="4.500" width="11.500" height="6.500" fill="#fff" /><path d="M19.500 6 V9.500 M1 0 V2.500 M4 0 V2.500 M0 2.800 H5 M0.800 3 V5.500 H4.200 V3 M2.500 5.500 V8" fill="none" stroke="#fff" strokeWidth="1.200" /></svg>
          </TrayItem>
          <TrayItem $gap={11}>
            <svg width="16" height="16" viewBox="0 0 16 16"><path d="M1 15.500 A14.500 14.500 0 0 1 15.500 1 M5 15.500 A10.500 10.500 0 0 1 15.500 5 M9 15.500 A6.500 6.500 0 0 1 15.500 9" fill="none" stroke="#b9bcc0" strokeWidth="1.300" /><circle cx="14" cy="14" r="1.900" fill="#fff" /></svg>
          </TrayItem>
          <TrayItem $gap={12}>
            <svg width="21" height="18" viewBox="0 0 21 18"><path d="M0.700 6 H3.500 L7.500 2.500 V15.500 L3.500 12 H0.700 Z" fill="none" stroke="#fff" strokeWidth="1.200" /><path d="M10.500 6.500 Q12 9 10.500 11.500 M13.500 4 Q16.500 9 13.500 14 M16.500 1 Q21.500 9 16.500 17" fill="none" stroke="#fff" strokeWidth="1.200" /></svg>
          </TrayItem>
          <TrayItem $gap={14}><Label size={14.8} w={29} color="#fff">ENG</Label></TrayItem>
          <Clock>
            <Label size={14.8} w={52} color="#fff">6:39 PM</Label>
            <Label size={14.8} w={77} color="#fff">2021-05-19</Label>
          </Clock>
          <TrayItem $gap={25}>
            <svg width="20" height="20" viewBox="0 0 20 20"><path d="M0 0 H20 V17 H12.500 L10 20 L7.500 17 H0 Z" fill="#fff" /><path d="M4 4.500 H16 M4 8.500 H16 M4 12.500 H12" stroke="#0a0e14" strokeWidth="1.100" /></svg>
          </TrayItem>
          <ShowDesktop />
        </TaskGroup>
      </Taskbar>
    </Window>
  );
}
